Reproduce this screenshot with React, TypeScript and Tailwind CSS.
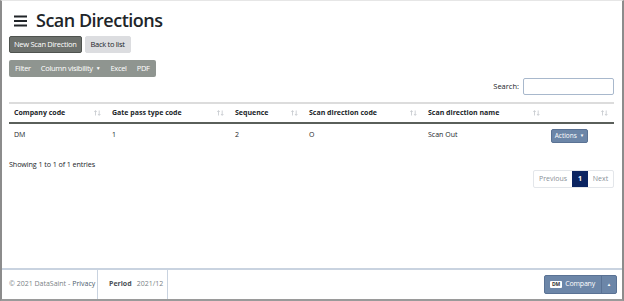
import React from "react";

const font = { fontFamily: '"Open Sans", "Noto Sans", Arial, sans-serif' };

function SortIcon() {
  return (
    <svg width="7" height="6" viewBox="0 0 7 6" className="mr-[1px]">
      <path d="M1.5 5.5V0.8M0.3 2L1.5 0.6L2.7 2" stroke="#c3c7cc" strokeWidth="0.8" fill="none" />
      <path d="M5.2 0.5V5.2M4 4L5.2 5.4L6.4 4" stroke="#c3c7cc" strokeWidth="0.8" fill="none" />
    </svg>
  );
}

const columns = [
  { label: "Company code", w: "w-[98px]" },
  { label: "Gate pass type code", w: "w-[123px]" },
  { label: "Sequence", w: "w-[74px]" },
  { label: "Scan direction code", w: "w-[119px]" },
  { label: "Scan direction name", w: "w-[123px]" },
  { label: "", w: "flex-1" },
];

export default function App() {
  return (
    <div
      className="w-[624px] h-[301px] bg-white flex flex-col border-l-2 border-r-2 border-b-2 border-t border-l-[#8c8c8c] border-r-[#8c8c8c] border-b-[#9a9a9a] border-t-[#e6e6e6] text-[#212529]"
      style={font}
    >
      <div className="flex-1 px-[7px]">
        <div className="flex items-center h-[26px] mt-[6px] pl-[5px]">
          <svg width="14" height="12" viewBox="0 0 14 12" className="mr-[8px] mt-[1px]">
            <rect x="0" y="0.5" width="13" height="2" fill="#212529" />
            <rect x="0" y="5" width="13" height="2" fill="#212529" />
            <rect x="0" y="9.5" width="13" height="2" fill="#212529" />
          </svg>
          <h1 className="text-[18px] font-semibold leading-none tracking-[-0.5px]">Scan Directions</h1>
        </div>
        <div className="flex gap-[3px] mt-[3px]">
          <button className="h-[17px] px-[4px] text-[7.5px] text-white bg-[#6c706c] border border-[#4f534f] rounded-[2px] tracking-[-0.3px]">
            New Scan Direction
          </button>
          <button className="h-[17px] px-[5px] text-[7.5px] text-[#212529] bg-[#dcdde0] border border-[#dcdde0] rounded-[2px] tracking-[-0.3px]">
            Back to list
          </button>
        </div>
        <div className="mt-[7px] inline-flex items-center h-[17px] bg-[#8f9590] rounded-[2px] text-white text-[7.5px] tracking-[-0.3px]">
          <span className="pl-[6px] pr-[5px]">Filter</span>
          <span className="px-[5px] flex items-center">
            Column visibility
            <span className="ml-[3px] text-[5px]">▼</span>
          </span>
          <span className="px-[5px]">Excel</span>
          <span className="pl-[5px] pr-[6px]">PDF</span>
        </div>
        <div className="flex justify-end items-center h-[18px] pr-[1px]">
          <span className="text-[7.5px] mr-[4px]">Search:</span>
          <div className="w-[91px] h-[17px] border border-[#a8b8cc] rounded-[2px]" />
        </div>
        <div className="mt-[7px] mr-[1px] border-t-2 border-[#dcdcdc]">
          <div className="flex h-[20px] items-center border-b-2 border-[#5a5f5a] text-[7px] font-bold">
            {columns.map((c, i) => (
              <div key={i} className={`${c.w} flex items-center justify-between pl-[5px] pr-[5px]`}>
                <span>{c.label}</span>
                <SortIcon />
              </div>
            ))}
          </div>
          <div className="flex h-[23px] items-center text-[7px]">
            <div className="w-[98px] pl-[5px]">DM</div>
            <div className="w-[123px] pl-[5px]">1</div>
            <div className="w-[74px] pl-[5px]">2</div>
            <div className="w-[119px] pl-[5px]">O</div>
            <div className="w-[123px] pl-[5px]">Scan Out</div>
            <div className="flex-1 pl-[5px]">
              <button className="h-[14px] w-[37px] bg-[#6c86a8] border border-[#5a7294] rounded-[2px] text-white text-[6.5px] flex items-center justify-center">
                Actions<span className="ml-[3px] text-[4.5px]">▼</span>
              </button>
            </div>
          </div>
        </div>
        <div className="text-[7.2px] mt-[12px] tracking-[-0.1px]">Showing 1 to 1 of 1 entries</div>
        <div className="flex justify-end pr-[1px]">
          <div className="flex h-[18px] text-[7px] border border-[#e3e6ea] rounded-[2px]">
            <span className="w-[38px] flex items-center justify-center text-[#8a9098]">Previous</span>
            <span className="w-[16px] flex items-center justify-center bg-[#0b2461] text-white font-bold">1</span>
            <span className="w-[25px] flex items-center justify-center text-[#8a9098]">Next</span>
          </div>
        </div>
      </div>
      <div className="h-[31px] border-t-2 border-[#c9d3e0] flex items-stretch text-[7px]">
        <div className="w-[96px] flex items-center pl-[7px] text-[#7a7f85] border-r border-[#c9d3e0]">
          © 2021 DataSaint - <span className="ml-[2px] text-[#4c5a6c]">Privacy</span>
        </div>
        <div className="w-[70px] flex items-center pl-[11px] border-r border-[#c9d3e0]">
          <span className="font-bold text-[#4a4f55]">Period</span>
          <span className="ml-[5px] text-[#7a7f85]">2021/12</span>
        </div>
        <div className="flex-1 flex items-center justify-end pr-[5px]">
          <div className="flex h-[19px] rounded-[2px] bg-[#6c86a8] border border-[#5a7294] text-white">
            <div className="flex items-center pl-[5px] pr-[6px] border-r border-[#5a7294]">
              <span className="bg-white text-[#333] text-[5px] font-bold px-[2px] h-[7px] leading-[7px] rounded-[1px] mr-[3px]">DM</span>
              <span className="text-[7px] tracking-[-0.2px]">Company</span>
            </div>
            <div className="w-[14px] flex items-center justify-center text-[4.5px]">▲</div>
          </div>
        </div>
      </div>
    </div>
  );
}
